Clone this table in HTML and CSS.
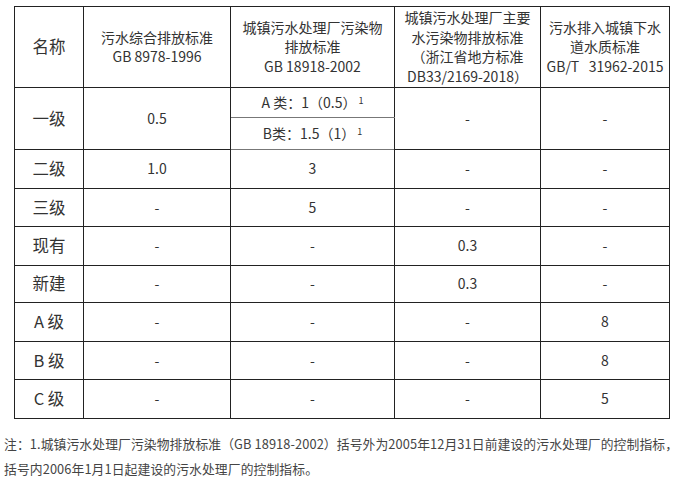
FILE: index.html
```html
<!DOCTYPE html>
<html lang="zh">
<head>
<meta charset="utf-8">
<link rel="stylesheet" href="styles.css">
</head>
<body>
<div class="page">
  <table class="std">
    <colgroup>
      <col class="c1"><col class="c2"><col class="c3"><col class="c4"><col class="c5">
    </colgroup>
    <thead>
      <tr class="r-hd">
        <th class="name">名称</th>
        <th>污水综合排放标准<br>GB 8978-1996</th>
        <th>城镇污水处理厂污染物<br>排放标准<br>GB 18918-2002</th>
        <th>城镇污水处理厂主要<br>水污染物排放标准<br>（浙江省地方标准<br>DB33/2169-2018）</th>
        <th>污水排入城镇下水<br>道水质标准<br>GB/T&nbsp;&nbsp;&nbsp;31962-2015</th>
      </tr>
    </thead>
    <tbody>
      <tr class="r-a">
        <td class="name" rowspan="2">一级</td>
        <td rowspan="2">0.5</td>
        <td class="sub">A 类：1（0.5）<sup>1</sup></td>
        <td rowspan="2">-</td>
        <td rowspan="2">-</td>
      </tr>
      <tr class="r-b">
        <td class="sub">B类：1.5（1）<sup>1</sup></td>
      </tr>
      <tr class="r-39"><td class="name">二级</td><td>1.0</td><td>3</td><td>-</td><td>-</td></tr>
      <tr class="r-38"><td class="name">三级</td><td>-</td><td>5</td><td>-</td><td>-</td></tr>
      <tr class="r-39"><td class="name">现有</td><td>-</td><td>-</td><td>0.3</td><td>-</td></tr>
      <tr class="r-37"><td class="name">新建</td><td>-</td><td>-</td><td>0.3</td><td>-</td></tr>
      <tr class="r-39"><td class="name">A 级</td><td>-</td><td>-</td><td>-</td><td>8</td></tr>
      <tr class="r-38"><td class="name">B 级</td><td>-</td><td>-</td><td>-</td><td>8</td></tr>
      <tr class="r-39"><td class="name">C 级</td><td>-</td><td>-</td><td>-</td><td>5</td></tr>
    </tbody>
  </table>
  <p class="note">注：1.城镇污水处理厂污染物排放标准（GB 18918-2002）括号外为2005年12月31日前建设的污水处理厂的控制指标，<br>括号内2006年1月1日起建设的污水处理厂的控制指标。</p>
</div>
</body>
</html>
```
FILE: styles.css
```css
html, body {
  margin: 0;
  padding: 0;
  background: #fff;
}

.page {
  padding: 6px 0 0 0;
  font-family: "Noto Sans CJK SC", sans-serif;
  color: #333;
}

.std {
  margin-left: 14px;
  width: 656px;
  border-collapse: collapse;
  table-layout: fixed;
  font-size: 14px;
}

.c1 { width: 69px; }
.c2 { width: 147px; }
.c3 { width: 164px; }
.c4 { width: 146px; }
.c5 { width: 129px; }

.std th,
.std td {
  border: 1px solid #222;
  padding: 0 2px;
  text-align: center;
  vertical-align: middle;
  font-weight: normal;
  line-height: 19.5px;
}

.std .name {
  font-size: 16.5px;
}

.std .sub {
  border-bottom-color: #777;
}

.std sup {
  font-size: 9px;
  line-height: 0;
  vertical-align: 4px;
  margin-left: 2px;
}

.r-hd { height: 81px; }
.r-a { height: 30px; }
.r-b { height: 32px; }
.r-39 { height: 39px; }
.r-38 { height: 38px; }
.r-37 { height: 37px; }

.note {
  margin: 12px 0 0 4px;
  font-size: 12.8px;
  line-height: 25px;
  letter-spacing: 0.1px;
  color: #444;
  white-space: nowrap;
}
```
